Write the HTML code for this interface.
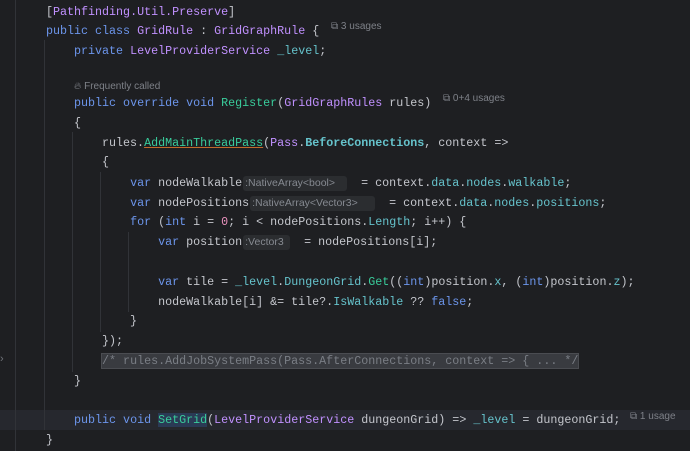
<!DOCTYPE html>
<html><head><meta charset="utf-8"><style>
html,body{margin:0;padding:0;background:#1e1f22;width:690px;height:451px;overflow:hidden;position:relative}
.l{position:absolute;left:0;height:20px;line-height:20px;white-space:pre;font-family:"Liberation Mono",monospace;font-size:11.68px;color:#c4c6cc}
.k{color:#6c95eb}.c{color:#c191ff}.m{color:#39cc9b}.f{color:#66c3cc}.n{color:#ed94c0}.b{color:#66c3cc;font-weight:bold}
.h{display:inline-block;font-family:"Liberation Sans",sans-serif;font-size:10.5px;color:#868a91;background:#2b2d30;border-radius:3px;height:15px;line-height:15px;vertical-align:0px;padding:0 2px;box-sizing:border-box;margin-left:1px}
.u{font-family:"Liberation Sans",sans-serif;font-size:10px;color:#7e8188;position:absolute}
.g{position:absolute;width:1px;background:#313338}
</style></head><body>
<div style="position:absolute;left:0;top:410px;width:690px;height:20px;background:#26282e"></div>
<div class="g" style="left:15px;top:0;height:451px"></div>
<div class="g" style="left:44px;top:40px;height:390px"></div>
<div class="g" style="left:72px;top:132px;height:240px"></div>
<div class="g" style="left:100px;top:172px;height:160px"></div>
<div class="g" style="left:128px;top:232px;height:80px"></div>
<div style="position:absolute;left:0;top:353px;color:#6f737a;font:11px 'Liberation Sans',sans-serif">›</div>

<div class="l" style="top:2px;left:46px">[<span class="c">Pathfinding.Util.Preserve</span>]</div>
<div class="l" style="top:21px;left:46px"><span class="k">public class</span> <span class="c">GridRule</span> : <span class="c">GridGraphRule</span> {</div>
<div class="u" style="left:331px;top:21px">⧉ 3 usages</div>
<div class="l" style="top:41px;left:46px">    <span class="k">private</span> <span class="c">LevelProviderService</span> <span class="f">_level</span>;</div>
<div class="u" style="left:74px;top:81px">🔥︎ Frequently called</div>
<div class="l" style="top:93px;left:46px">    <span class="k">public override void</span> <span class="m">Register</span>(<span class="c">GridGraphRules</span> rules)</div>
<div class="u" style="left:443px;top:93px">⧉ 0+4 usages</div>
<div class="l" style="top:113px;left:46px">    {</div>
<div class="l" style="top:133px;left:46px">        rules.<span class="m" style="text-decoration:underline;text-decoration-color:#c06a2a">AddMainThreadPass</span>(<span class="c">Pass</span>.<span class="b">BeforeConnections</span>, context =&gt;</div>
<div class="l" style="top:152px;left:46px">        {</div>
<div class="l" style="top:173px;left:46px">            <span class="k">var</span> nodeWalkable<span class="h" style="width:104px">:NativeArray&lt;bool&gt;</span>  = context.<span class="f">data</span>.<span class="f">nodes</span>.<span class="f">walkable</span>;</div>
<div class="l" style="top:193px;left:46px">            <span class="k">var</span> nodePositions<span class="h" style="width:125px">:NativeArray&lt;Vector3&gt;</span>  = context.<span class="f">data</span>.<span class="f">nodes</span>.<span class="f">positions</span>;</div>
<div class="l" style="top:212px;left:46px">            <span class="k">for</span> (<span class="k">int</span> i = <span class="n">0</span>; i &lt; nodePositions.<span class="f">Length</span>; i++) {</div>
<div class="l" style="top:232px;left:46px">                <span class="k">var</span> position<span class="h" style="width:47px">:Vector3</span>  = nodePositions[i];</div>
<div class="l" style="top:272px;left:46px">                <span class="k">var</span> tile = <span class="f">_level</span>.<span class="f">DungeonGrid</span>.<span class="m">Get</span>((<span class="k">int</span>)position.<span class="f">x</span>, (<span class="k">int</span>)position.<span class="f">z</span>);</div>
<div class="l" style="top:292px;left:46px">                nodeWalkable[i] &amp;= tile?.<span class="f">IsWalkable</span> ?? <span class="k">false</span>;</div>
<div class="l" style="top:311px;left:46px">            }</div>
<div class="l" style="top:331px;left:46px">        });</div>
<div class="l" style="top:351px;left:46px">        <span style="color:#7a7e85;background:#393b40;outline:1px solid #4a4c51">/* rules.AddJobSystemPass(Pass.AfterConnections, context =&gt; { ... */</span></div>
<div class="l" style="top:371px;left:46px">    }</div>
<div class="l" style="top:410px;left:46px">    <span class="k">public void</span> <span class="m" style="background:#2a3a55">SetGrid</span>(<span class="c">LevelProviderService</span> dungeonGrid) =&gt; <span class="f">_level</span> = dungeonGrid;</div>
<div class="u" style="left:630px;top:411px">⧉ 1 usage</div>
<div class="l" style="top:430px;left:46px">}</div>
</body></html>
